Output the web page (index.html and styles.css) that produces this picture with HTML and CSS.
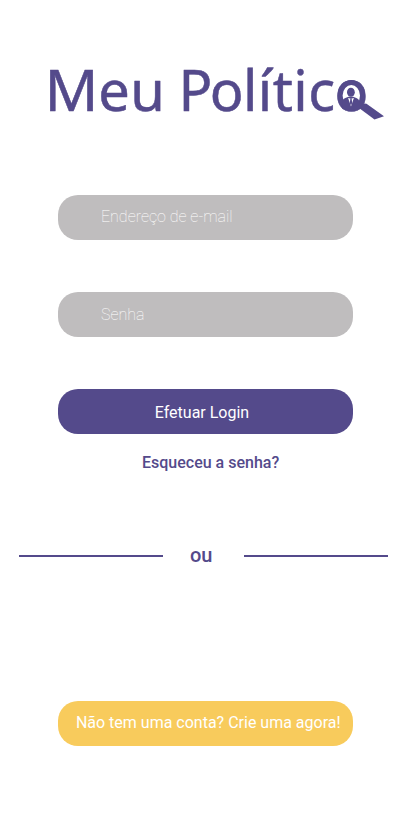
FILE: index.html
```html
<!DOCTYPE html>
<html lang="pt-BR">
<head>
<meta charset="utf-8">
<meta name="viewport" content="width=device-width, initial-scale=1">
<title>Meu Político</title>
<link rel="stylesheet" href="styles.css">
</head>
<body>
<main class="screen">
  <h1 class="brand">
    <svg class="logo" viewBox="0 -10 411 90" width="411" height="90">
      <text class="wordmark" y="56" x="44.600 98.200 130.300 160 178.500 209.700 243 257.700 272.800 293.300 308.300 334.500"><tspan textLength="54" lengthAdjust="spacingAndGlyphs">M</tspan>eu Político</text>
      <g class="glass">
        <ellipse cx="351.300" cy="40.500" rx="11.200" ry="13"/>
        <path class="handle" d="M364.500 48.500l2 .2L384 61.300l-9.500 3.200L357 51.500z"/>
      </g>
      <ellipse class="head" cx="350.900" cy="37.300" rx="3.900" ry="4.500"/>
      <path class="bust" d="M342.300 54v-7q0-3 3-4l3.200-1.300h4.600l3.200 1.300q3 1 3 4v7q-8.500 2-17 0z"/>
      <path class="shirt" d="M348.100 43l2.900 8.500 2.900-8.500-2.900.8z"/>
      <path class="tie" d="M350.400 43.500h1.200l.6 4.500-1.200 2.500-1.200-2.500z"/>
    </svg>
  </h1>
  <form class="login">
    <input class="field email" type="email" placeholder="Endereço de e-mail" aria-label="Endereço de e-mail">
    <input class="field" type="password" placeholder="Senha" aria-label="Senha">
    <button class="submit" type="button">Efetuar Login</button>
  </form>
  <a class="forgot">Esqueceu a senha?</a>
  <div class="divider"><span class="line"></span><span class="or">ou</span><span class="line"></span></div>
  <button class="signup" type="button">Não tem uma conta? Crie uma agora!</button>
</main>
</body>
</html>
```
FILE: styles.css
```css
* { box-sizing: border-box; }
body { margin: 0; background: #fff; font-family: Roboto, sans-serif; color: #544a8b; }
.screen { width: 411px; height: 823px; display: flex; flex-direction: column; }
.brand { margin: 45px 0 60px; height: 90px; }
.logo { display: block; overflow: visible; }
.wordmark { font: 400 56px "Noto Sans", sans-serif; fill: #544a8b; stroke: #544a8b; stroke-width: .5px; stroke-linejoin: round; }
.glass ellipse { fill: #fff; stroke: #544a8b; stroke-width: 5px; }
.handle, .head, .bust, .tie { fill: #544a8b; }
.shirt { fill: #fff; }
.login { display: flex; flex-direction: column; gap: 52px; padding: 0 58px; }
.field, .submit, .signup { height: 45px; border: 0; border-radius: 20px; font: 400 16px Roboto, sans-serif; }
.field { width: 100%; padding: 0 43px; background: #bfbdbe; color: #fff; font-weight: 100; outline: 0; }
.email { padding-bottom: 2px; }
.field::placeholder { color: #fff; opacity: 1; }
.submit { background: #544a8b; color: #fff; padding: 2px 7px 0 0; }
.forgot { margin: 19px 0 0 142px; font-size: 16px; line-height: 19px; font-weight: 500; }
.divider { display: flex; align-items: center; margin: 72px 23px 0 19px; height: 24px; }
.line { width: 144px; height: 2px; background: #544a8b; }
.or { width: 81px; padding: 0 0 2px 27px; font-size: 20px; line-height: 24px; font-weight: 500; }
.signup { margin: 133px 58px 0; padding: 0 0 2px 5.500px; background: #f8cb5c; color: #fff; white-space: nowrap; }
```
